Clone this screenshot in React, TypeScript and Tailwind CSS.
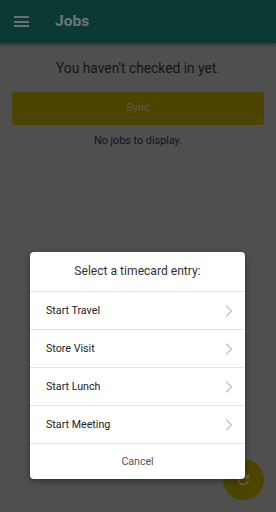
import { ChevronRight } from 'lucide-react'

const ENTRIES = ['Start Travel', 'Store Visit', 'Start Lunch', 'Start Meeting']

/* ── page behind the modal (already dimmed) ── */
function JobsPage() {
  return (
    <div className="h-full flex flex-col bg-[#4f4f4f]">
      {/* header */}
      <div className="h-[43px] shrink-0 flex items-center bg-[#0b3934] shadow-[0_2px_3px_rgba(0,0,0,0.35)]">
        <div className="ml-[14px] w-[15px] flex flex-col gap-[2.5px]">
          <span className="h-[2px] bg-[#6b7371]" />
          <span className="h-[2px] bg-[#6b7371]" />
          <span className="h-[2px] bg-[#6b7371]" />
        </div>
        <span className="ml-[26px] text-[15.5px] font-bold text-[#6e7775] leading-none">Jobs</span>
      </div>

      <div className="pt-[15px] text-center text-[13.8px] text-[#151515] leading-5">
        You haven't checked in yet.
      </div>

      <div className="mx-[12px] mt-[14px] h-[33px] rounded-[3px] bg-[#4d4400] flex items-center justify-center text-[11px] text-[#5f5b48]">
        Sync
      </div>

      <div className="mt-[8px] text-center text-[10.8px] text-[#141414] leading-4">
        No jobs to display.
      </div>
    </div>
  )
}

export default function App() {
  return (
    <div className="relative w-[276px] h-[512px] overflow-hidden" style={{ fontFamily: 'Roboto, "Noto Sans", sans-serif' }}>
      <JobsPage />

      {/* FAB */}
      <div className="absolute left-[223px] top-[459px] w-[41px] h-[41px] rounded-full bg-[#4d4400] flex items-center justify-center">
        <svg width="17" height="17" viewBox="0 0 24 24" fill="#6b6440">
          <path d="M17.65 6.35C16.2 4.9 14.21 4 12 4c-4.42 0-7.99 3.58-7.99 8s3.57 8 7.99 8c3.73 0 6.84-2.55 7.73-6h-2.08c-.82 2.33-3.04 4-5.65 4-3.31 0-6-2.69-6-6s2.69-6 6-6c1.66 0 3.14.69 4.22 1.78L13 11h7V4l-2.35 2.35z" />
        </svg>
      </div>

      {/* timecard dialog */}
      <div className="absolute left-[30px] top-[252px] w-[215px] rounded-[4px] bg-white shadow-[0_2px_6px_rgba(0,0,0,0.4)] overflow-hidden">
        <div className="h-[39px] flex items-center justify-center text-[12.1px] text-[#333]">
          Select a timecard entry:
        </div>
        {ENTRIES.map(label => (
          <div key={label} className="h-[38px] border-t-[1.5px] border-[#e3e3e3] flex items-center pl-[16px] pr-[6px]">
            <span className="flex-1 pt-[2px] text-[10.7px] text-[#222]">{label}</span>
            <ChevronRight size={20} strokeWidth={1.4} className="text-[#bcc3cd]" />
          </div>
        ))}
        <div className="h-[36px] border-t-[1.5px] border-[#e3e3e3] flex items-center justify-center text-[10.6px] text-[#555]">
          Cancel
        </div>
      </div>
    </div>
  )
}
